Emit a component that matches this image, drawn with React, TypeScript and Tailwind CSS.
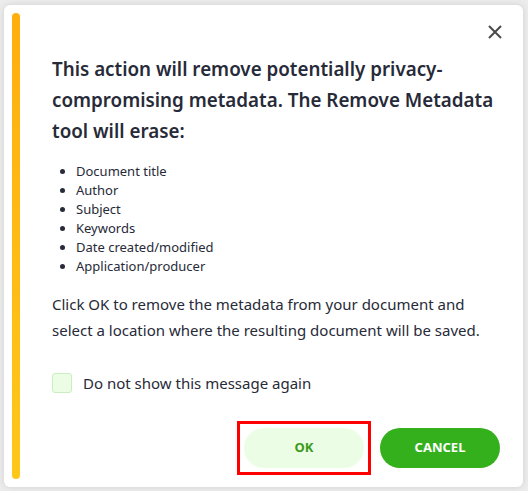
import React from "react";

export default function App() {
  const items = [
    "Document title",
    "Author",
    "Subject",
    "Keywords",
    "Date created/modified",
    "Application/producer",
  ];
  return (
    <div
      className="w-[528px] h-[491px] bg-[#ececec] pt-[5px] pl-[4px] overflow-hidden"
      style={{ fontFamily: '"Noto Sans", "Open Sans", sans-serif' }}
    >
      <div className="relative w-[519px] h-[482px] bg-white rounded-[6px] shadow-[0_0_6px_rgba(0,0,0,0.12)] flex p-2">
        <div className="w-2 h-full rounded-full bg-gradient-to-b from-[#ffae0f] to-[#fdc71a]" />
        <button className="absolute right-[21px] top-[20px] text-[#4a4a4a]">
          <svg width="14" height="14" viewBox="0 0 14 14" fill="none" stroke="currentColor" strokeWidth="2">
            <path d="M1 1 L13 13 M13 1 L1 13" />
          </svg>
        </button>
        <div className="ml-[32px] flex-1 flex flex-col text-[#272a38]">
          <h1 className="mt-[41px] text-[18.8px] leading-[31px] font-semibold whitespace-nowrap">
            This action will remove potentially privacy-
            <br />
            compromising metadata. The Remove Metadata
            <br />
            tool will erase:
          </h1>
          <ul className="mt-[15px] pl-[24px] list-disc text-[13px] leading-[19px]">
            {items.map((t) => (
              <li key={t}>{t}</li>
            ))}
          </ul>
          <p className="mt-[15px] text-[15px] leading-[26px] whitespace-nowrap">
            Click OK to remove the metadata from your document and
            <br />
            select a location where the resulting document will be saved.
          </p>
          <label className="mt-[29px] flex items-center gap-[11px] text-[15px]">
            <span className="w-5 h-5 rounded-[3px] bg-[#ecfde5] border border-[#c8efbd]" />
            <span>Do not show this message again</span>
          </label>
          <div className="mt-[26px] flex items-center justify-end pr-[15px] gap-[9px]">
            <div className="p-[4px] border-[3px] border-[#ff0000]">
              <button className="block w-[120px] h-[40px] rounded-full bg-[#ecfde5] text-[#3c9a1b] text-[13px] font-bold">
                OK
              </button>
            </div>
            <button className="block w-[120px] h-[40px] rounded-full bg-[#34b01c] text-white text-[13px] font-bold">
              CANCEL
            </button>
          </div>
        </div>
      </div>
    </div>
  );
}
